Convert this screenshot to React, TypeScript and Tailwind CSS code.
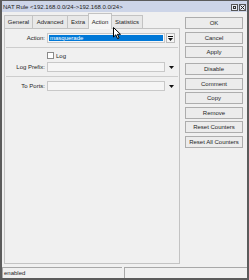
import React from "react";

function Btn({ label, className = "" }: { label: string; className?: string }) {
  return (
    <div
      className={`h-[12px] w-[58px] border border-[#adadad] bg-[#ececec] flex items-center justify-center ${className}`}
    >
      {label}
    </div>
  );
}

function Tab({ label, w, active = false }: { label: string; w: string; active?: boolean }) {
  return (
    <div
      className={`${w} ${
        active
          ? "h-[15px] bg-[#f5f5f5] z-10 -mb-px h-[16px]"
          : "h-[13px] bg-[#e8e8e8]"
      } -ml-px first:ml-0 border border-b-0 border-[#c3c3c3] flex items-center justify-center`}
    >
      {label}
    </div>
  );
}

export default function App() {
  return (
    <div className="relative w-[249px] h-[280px] bg-[#5b5b5b] pt-px px-[2px] pb-[2px] font-['Liberation_Sans',Arial,sans-serif] text-[6px] leading-none text-[#1e1e1e]">
      <div className="h-full flex flex-col bg-[#f0f0f0]">
        {/* title bar */}
        <div className="h-[11px] bg-[#cdd5e8] flex items-center justify-between pl-px pr-[1px]">
          <span className="text-[#222]">NAT Rule &lt;192.168.0.0/24-&gt;192.168.0.0/24&gt;</span>
          <div className="flex gap-px mt-px">
            <div className="w-[7px] h-[7px] border border-[#555] bg-[#e6e9f0] flex items-center justify-center">
              <div className="w-[3px] h-[3px] border border-[#333]" />
            </div>
            <div className="w-[7px] h-[7px] border border-[#555] bg-[#e6e9f0] flex items-center justify-center">
              <svg width="5" height="5" viewBox="0 0 5 5">
                <path d="M0.5 0.5 L4.5 4.5 M4.5 0.5 L0.5 4.5" stroke="#222" strokeWidth="1" />
              </svg>
            </div>
          </div>
        </div>

        {/* body */}
        <div className="flex-1 flex">
          {/* left: tabs + panel */}
          <div className="w-[178px] pl-[2px] pb-[2px] flex flex-col">
            <div className="h-[16px] flex items-end">
              <Tab label="General" w="w-[29px]" />
              <Tab label="Advanced" w="w-[36px]" />
              <Tab label="Extra" w="w-[22px]" />
              <Tab label="Action" w="w-[24px]" active />
              <Tab label="Statistics" w="w-[32px]" />
            </div>
            <div className="flex-1 border border-[#c3c3c3] bg-[#f0f0f0] flex flex-col">
              {/* Action row */}
              <div className="flex items-center h-[10px] mt-[4px]">
                <div className="w-[42px] text-right pr-[2px]">Action:</div>
                <div className="w-[118px] h-full border border-[#c8c8c8] bg-[#f7f7f7] p-px">
                  <div className="h-full bg-[#0078d7] text-white flex items-center pl-px">masquerade</div>
                </div>
                <div className="ml-px w-[9px] h-[10px] border border-[#bcbcbc] bg-[#f4f4f4] flex items-center justify-center">
                  <svg width="5" height="5" viewBox="0 0 5 5">
                    <rect x="0" y="0" width="5" height="1" fill="#111" />
                    <path d="M0 2 L5 2 L2.5 5 Z" fill="#111" />
                  </svg>
                </div>
              </div>
              <div className="h-px bg-[#cdcdcd] mt-[4px] mx-px" />
              {/* Log */}
              <div className="flex items-center h-[7px] mt-[4px]">
                <div className="w-[42px]" />
                <div className="w-[7px] h-[7px] border border-[#8a8a8a] bg-white" />
                <span className="ml-[2px]">Log</span>
              </div>
              {/* Log Prefix */}
              <div className="flex items-center h-[10px] mt-[3px]">
                <div className="w-[42px] text-right pr-[2px]">Log Prefix:</div>
                <div className="w-[118px] h-full border border-[#c8c8c8] bg-[#f5f5f5]" />
                <svg className="ml-[4px]" width="5" height="3" viewBox="0 0 5 3">
                  <path d="M0 0 L5 0 L2.5 3 Z" fill="#111" />
                </svg>
              </div>
              <div className="h-px bg-[#cdcdcd] mt-[4px] mx-px" />
              {/* To Ports */}
              <div className="flex items-center h-[10px] mt-[4px]">
                <div className="w-[42px] text-right pr-[2px]">To Ports:</div>
                <div className="w-[118px] h-full border border-[#c8c8c8] bg-[#f5f5f5]" />
                <svg className="ml-[4px]" width="5" height="3" viewBox="0 0 5 3">
                  <path d="M0 0 L5 0 L2.5 3 Z" fill="#111" />
                </svg>
              </div>
            </div>
          </div>

          {/* right: buttons */}
          <div className="flex flex-col pl-[5px] pt-[5px] gap-[2.5px]">
            <Btn label="OK" />
            <Btn label="Cancel" />
            <Btn label="Apply" />
            <Btn label="Disable" className="mt-[2.5px]" />
            <Btn label="Comment" />
            <Btn label="Copy" />
            <Btn label="Remove" />
            <Btn label="Reset Counters" />
            <Btn label="Reset All Counters" />
          </div>
        </div>

        {/* status bar */}
        <div className="h-[12px] flex gap-[2px] pt-px">
          <div className="w-[120px] h-[11px] border-t border-l border-[#a8a8a8] flex items-center pl-px">
            enabled
          </div>
          <div className="flex-1 h-[11px] border-t border-l border-[#a8a8a8]" />
        </div>
      </div>

      {/* mouse cursor */}
      <svg className="absolute left-[113px] top-[27px]" width="9" height="13" viewBox="0 0 9 13">
        <path
          d="M0.5 0.5 L0.5 10 L2.8 7.8 L4.6 11.6 L6.1 10.9 L4.4 7.3 L7.5 7.3 Z"
          fill="#fff"
          stroke="#000"
          strokeWidth="1"
          strokeLinejoin="round"
        />
      </svg>
    </div>
  );
}
